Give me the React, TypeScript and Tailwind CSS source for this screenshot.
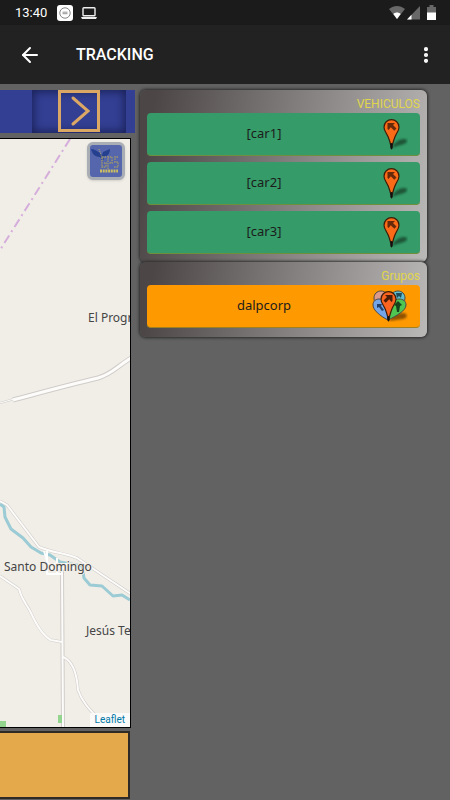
import { ArrowLeft, MoreVertical } from "lucide-react";

const VEHICLES = ["[car1]", "[car2]", "[car3]"];

const PIN_SHAPE = "M8.500 0.700C4.500 0.700 1 3.800 1 8.200c0 3.300 2.500 6 4.200 9.800C6.700 21.500 7.500 25 8.500 29c1.200-4 2-7.500 3.400-11C13.500 14 16 11.500 16 8.200c0-4.400-3.500-7.500-7.500-7.500z";
const ARROW_NW = "M4.500 4h7.500l-2 2 3.500 3.500-2.200 2.300L7.800 8.300 5.500 11 4.500 10z";

function PinIcon() {
  return (
    <svg viewBox="0 0 26 32" className="h-8 w-[26px] shrink-0" aria-hidden="true">
      <defs>
        <filter id="pin-blur" x="-30%" y="-30%" width="160%" height="160%">
          <feGaussianBlur stdDeviation="0.8" />
        </filter>
      </defs>
      <path
        d="M10 30c2-5 7-9 12-9 4 0 4 3.500 0 5-3 1.200-7 1.500-12 4z"
        fill="#123d27"
        opacity="0.75"
        filter="url(#pin-blur)"
      />
      <g transform="translate(1 1)">
        <path d={PIN_SHAPE} fill="#fb6a17" stroke="#3d1d08" strokeWidth="1.200" />
        <path d={ARROW_NW} fill="#66290a" />
        <path d="M8.500 25v4" stroke="#111" strokeWidth="2.200" strokeLinecap="round" />
      </g>
    </svg>
  );
}

function PinGroupIcon() {
  return (
    <svg viewBox="0 0 36 32" className="h-8 w-9 shrink-0" aria-hidden="true">
      <path
        d="M17 31c3-5 8-8 14-8 5 0 5 5 0 6-5 1-9 1-14 2z"
        fill="#6b3a00"
        opacity="0.75"
        filter="url(#pin-blur)"
      />
      <g stroke="#4a4a4a" strokeWidth="1">
        <path d="M16 28C8 21 2 15 2 8c0-4 3-7 7-7 5 0 7 4 7 9z" fill="#dc9a8c" />
        <path d="M16 28c8-7 17-13 17-20 0-4-3-7-7-7-5 0-8 4-8 9z" fill="#5fbfd0" />
        <path d="M16 30C8 26 1 20 1 15c0-4 3-6 6-6 5 0 7 4 8 9z" fill="#74a5e8" />
        <path d="M16 30c8-4 18-9 18-15 0-4-3-6-7-6-5 0-8 4-10 9z" fill="#4fc552" />
      </g>
      <path d="M5 14h5l-1 2 3 4-2 1-3-4-2 1z" fill="#23406a" />
      <path d="M24 3h6l-1 5-2-2-2 2z" fill="#1d4b5c" />
      <path d="M26 11l4 4-2 1-1 6h-2l-1-6-2-1z" fill="#17431d" />
      <g transform="translate(8 1)">
        <path d={PIN_SHAPE} fill="#fb6420" stroke="#3d1d08" strokeWidth="1.200" />
        <path d={ARROW_NW} transform="matrix(-1 0 0 1 17 0)" fill="#4b1c08" />
        <path d="M8.500 26v3" stroke="#111" strokeWidth="2.200" strokeLinecap="round" />
      </g>
    </svg>
  );
}

function StatusBar() {
  return (
    <div className="flex h-[25px] items-center bg-[#1b1b1b] pl-[15px] pr-[14px] text-white">
      <span className="text-[13px] leading-4">13:40</span>
      <svg viewBox="0 0 16 16" className="ml-[10px] h-4 w-4" aria-hidden="true">
        <rect width="16" height="16" rx="3" fill="#fff" />
        <circle cx="8" cy="8" r="5.200" fill="none" stroke="#666" strokeWidth="0.800" />
        <path d="M5.500 7.200h5M5.500 8.700h5" stroke="#888" strokeWidth="0.900" />
      </svg>
      <svg viewBox="0 0 16 12" className="ml-2 h-3 w-4" aria-hidden="true">
        <rect x="2" y="0.800" width="12" height="8" rx="0.800" fill="none" stroke="#eee" strokeWidth="1.400" />
        <path d="M0 10h16l-1 2H1z" fill="#eee" />
      </svg>
      <svg viewBox="0 0 16 14" className="ml-auto h-[14px] w-4" aria-hidden="true">
        <path d="M0 3C5-1 11-1 16 3L8 13z" fill="#686868" />
        <path d="M4.300 8c2-2 5.400-2 7.400 0L8 13z" fill="#fff" />
      </svg>
      <svg viewBox="0 0 13 14" className="ml-[2px] h-[14px] w-[13px]" aria-hidden="true">
        <path d="M13 0v13.500H0z" fill="#686868" />
        <path d="M4.500 8.800v4.700H0z" fill="#fff" />
      </svg>
      <svg viewBox="0 0 9 15" className="ml-[7px] h-[15px] w-[9px]" aria-hidden="true">
        <path d="M2.500 0h4v2H9v6H0V2h2.500z" fill="#686868" />
        <path d="M0 7.500h9V15H0z" fill="#fff" />
      </svg>
    </div>
  );
}

function AppBar() {
  return (
    <header className="flex h-[59px] items-center bg-[#222] pl-[18px] pr-[14px] text-white">
      <button type="button" aria-label="Back">
        <ArrowLeft className="h-6 w-6" strokeWidth={2} />
      </button>
      <h1 className="ml-[34px] text-base font-medium">TRACKING</h1>
      <button type="button" aria-label="More options" className="ml-auto">
        <MoreVertical className="h-5 w-5 fill-current" strokeWidth={3} />
      </button>
    </header>
  );
}

function MapView() {
  return (
    <section className="relative mr-1 mt-[5px] min-h-[300px] flex-1 overflow-hidden border border-l-0 border-black bg-[#f1eee8]">
      <svg
        viewBox="0 139 130 588"
        preserveAspectRatio="xMinYMin slice"
        className="absolute inset-0 h-full w-full"
        role="img"
        aria-label="Map"
        fontFamily="'Noto Sans', sans-serif"
      >
        <path d="M70 139L0 250" fill="none" stroke="#d6aedb" strokeWidth="2" strokeDasharray="9 4 2 4" />
        <g fill="none" strokeLinejoin="round">
          <g stroke="#cfccc9">
            <path d="M0 403l14-4" strokeWidth="2" />
            <path d="M13 400c30-8 55-15 85-22 14-4 17-10 33-20" strokeWidth="5" />
            <path d="M0 501l7 4 32 42c14 6 26 6 38 11l54 36" strokeWidth="3" />
            <path d="M0 576l19 13c3 12 8 15 12 24 6 13 12 23 20 27l11 2" strokeWidth="3" />
            <path d="M62 570l1 157" strokeWidth="4" />
            <path d="M63 657c10 4 14 18 15 33 4 12 12 20 20 28" strokeWidth="3" />
          </g>
          <path
            d="M0 504l4 3 1 10 6 12 12 9 8 9 10 6 9 2 10 7 22 4 2 12 6 7 12 1 11 10 9-1 8 5"
            stroke="#9bcbd4"
            strokeWidth="3"
          />
          <path d="M44 551l4 13h19M47 550v24h16M50 568h28M57 558v16" stroke="#fff" strokeWidth="2" />
          <g stroke="#fdfcfa">
            <path d="M0 403l14-4" strokeWidth="1" />
            <path d="M13 400c30-8 55-15 85-22 14-4 17-10 33-20" strokeWidth="3" />
            <path d="M0 501l7 4 32 42c14 6 26 6 38 11l54 36" strokeWidth="2" />
            <path d="M0 576l19 13c3 12 8 15 12 24 6 13 12 23 20 27l11 2" strokeWidth="2" />
            <path d="M62 570l1 157" strokeWidth="2" />
            <path d="M63 657c10 4 14 18 15 33 4 12 12 20 20 28" strokeWidth="2" />
          </g>
        </g>
        <path d="M58 715h4v8h-4zM0 721h6v6H0z" fill="#93d58f" />
        <g fill="#454545" fontSize="12" stroke="#f1eee8" strokeWidth="2" paintOrder="stroke">
          <text x="88" y="322">El Progr</text>
          <text x="4" y="571">Santo Domingo</text>
          <text x="86" y="635">Jesús Te</text>
        </g>
      </svg>
      <button
        type="button"
        aria-label="Map layers"
        className="absolute right-[5px] top-[3px] h-[38px] w-[38px] rounded-md border-[3px] border-[#a9adb4] bg-[#5666ac] shadow"
      >
        <svg viewBox="0 0 32 32" aria-hidden="true">
          <path d="M1 4c3 0 6 2 9 4l2 2 1-3 7-3c0 4-2 7-6 8l-1 5-3-5C5 12 2 9 1 4z" fill="#24408f" />
          <path d="M9 4l4 12" stroke="#b7a46b" strokeDasharray="1 1" />
          <g fill="none" stroke="#8d8c7c" strokeWidth="1.800" strokeDasharray="1.500 0.800">
            <path d="M16 12h-4v10h4v-4h-2M18 24V12h4v6h-3M28 12h-3v5h3v5h-4" />
          </g>
          <path d="M10 26h18" stroke="#cbbd62" strokeWidth="3" strokeDasharray="2 0.700" />
        </svg>
      </button>
      <a
        href="#leaflet"
        className="absolute bottom-0 right-0 bg-white/70 px-[5px] text-[10px] leading-[14px] text-[#0078a8]"
      >
        Leaflet
      </a>
    </section>
  );
}

const PANEL =
  "rounded-md bg-linear-[100deg] from-[#4c4746] from-5% to-[#bbb9b8] px-[7px] shadow-[0_0_3px_1px_#2c2c2c]";
const PANEL_TITLE = "h-[23px] pt-[6px] text-right text-[12px] leading-4 text-[#e0d64c]";
const ROW =
  "grid h-[43px] w-full grid-cols-[1fr_39px] items-center rounded-[4px] border-b font-['Noto_Sans',sans-serif] text-[13px] text-[#1c1c1c]";

function SidePanel() {
  return (
    <aside className="ml-[5px] mr-[23px] min-w-0 flex-1 pt-[6px]">
      <section className={`${PANEL} pb-2`}>
        <h2 className={PANEL_TITLE}>VEHICULOS</h2>
        <div className="flex flex-col gap-[6px]">
          {VEHICLES.map((name) => (
            <button key={name} type="button" className={`${ROW} border-[#6f8f3c] bg-[#359b68]`}>
              <span>{name}</span>
              <span className="flex justify-end pr-[12px]">
                <PinIcon />
              </span>
            </button>
          ))}
        </div>
      </section>
      <section className={`${PANEL} pb-[9px]`}>
        <h2 className={PANEL_TITLE}>Grupos</h2>
        <button type="button" className={`${ROW} border-[#a08020] bg-[#ff9900]`}>
          <span>dalpcorp</span>
          <span className="flex justify-end pr-[12px]">
            <PinGroupIcon />
          </span>
        </button>
      </section>
    </aside>
  );
}

export default function App() {
  return (
    <div className="flex min-h-screen flex-col bg-[#626262] font-[Roboto,sans-serif]">
      <StatusBar />
      <AppBar />
      <main className="flex flex-1">
        <div className="flex w-[135px] shrink-0 flex-col pt-[6px]">
          <nav className="flex h-[43px] justify-end bg-[#333f93] pr-[9px]">
            <div className="flex w-[94px] justify-center bg-[#333f93] shadow-[inset_0_0_8px_2px_#1a2258]">
              <button type="button" aria-label="Next" className="h-[42px] w-[42px] border-[3px] border-[#dba765]">
                <svg viewBox="0 0 36 36" aria-hidden="true">
                  <path d="M12 5l15 13-15 13" fill="none" stroke="#dba765" strokeWidth="3" strokeLinecap="round" />
                </svg>
              </button>
            </div>
          </nav>
          <MapView />
          <footer className="mb-px mr-[5px] mt-[3px] h-[68px] border-2 border-l-0 border-[#2f2a26] bg-[#e3a94b]" />
        </div>
        <SidePanel />
      </main>
    </div>
  );
}
